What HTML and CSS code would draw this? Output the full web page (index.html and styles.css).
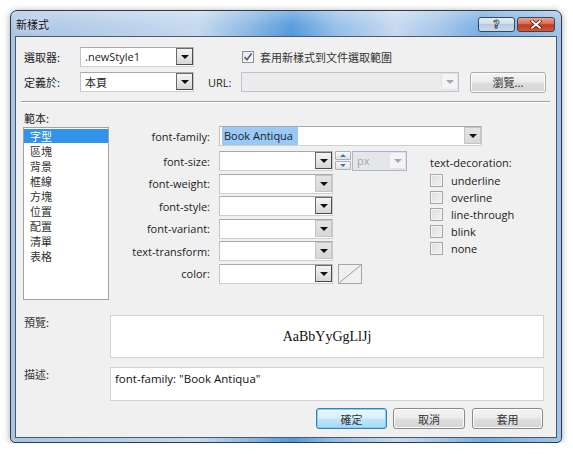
FILE: index.html
```html
<!DOCTYPE html>
<html lang="zh-Hant">
<head>
<meta charset="utf-8">
<title>新樣式</title>
<link rel="stylesheet" href="styles.css">
</head>
<body>
<div class="window">
  <div class="titlebar">
    <span class="title zh">新樣式</span>
    <div class="caps">
      <span class="cap help">?</span>
      <span class="cap close"><svg width="12" height="9" viewBox="0 0 12 9"><path d="M2 1.2 L10 7.8 M10 1.2 L2 7.8" stroke="#5a2416" stroke-width="3.4" stroke-linecap="square"/><path d="M2 1.2 L10 7.8 M10 1.2 L2 7.8" stroke="#ffffff" stroke-width="1.8" stroke-linecap="square"/></svg></span>
    </div>
  </div>
  <div class="client">
    <div class="row">
      <span class="lbl1 zh">選取器:</span>
      <div class="combo w114"><span class="val">.newStyle1</span><span class="dd"></span></div>
      <label class="apply">
        <span class="chk-on"><svg width="10" height="10" viewBox="0 0 10 10"><path d="M1.5 5.2 L4 7.8 L8.6 1.6" fill="none" stroke="#4a5f85" stroke-width="1.7"/></svg></span>
        <span class="zh">套用新樣式到文件選取範圍</span>
      </label>
    </div>
    <div class="row r2">
      <span class="lbl1 zh">定義於:</span>
      <div class="combo w114"><span class="val zh">本頁</span><span class="dd"></span></div>
      <span class="url-lbl">URL:</span>
      <div class="combo url disabled"><span class="val"></span><span class="dd off"></span></div>
      <span class="btn browse zh">瀏覽...</span>
    </div>
    <div class="sep"></div>
    <div class="main">
      <div class="cats">
        <div class="cats-lbl zh">範本:</div>
        <ul class="list zh">
          <li class="sel">字型</li>
          <li>區塊</li>
          <li>背景</li>
          <li>框線</li>
          <li>方塊</li>
          <li>位置</li>
          <li>配置</li>
          <li>清單</li>
          <li>表格</li>
        </ul>
      </div>
      <div class="form">
        <span class="flbl first">font-family:</span>
        <div class="combo wide first"><span class="val"><span class="hl">Book Antiqua</span></span><span class="dd flat"></span></div>

        <span class="flbl">font-size:</span>
        <div class="fs">
          <div class="combo w114"><span class="val"></span><span class="dd"></span></div>
          <div class="spin"><span class="sp up"></span><span class="sp down"></span></div>
          <div class="combo px disabled"><span class="val">px</span><span class="dd off"></span></div>
        </div>

        <div class="deco">
          <div class="deco-lbl">text-decoration:</div>
          <div class="cb-row"><span class="cb"></span><span>underline</span></div>
          <div class="cb-row"><span class="cb"></span><span>overline</span></div>
          <div class="cb-row"><span class="cb"></span><span>line-through</span></div>
          <div class="cb-row"><span class="cb"></span><span>blink</span></div>
          <div class="cb-row"><span class="cb"></span><span>none</span></div>
        </div>

        <span class="flbl">font-weight:</span>
        <div class="combo w114"><span class="val"></span><span class="dd flat"></span></div>

        <span class="flbl">font-style:</span>
        <div class="combo w114"><span class="val"></span><span class="dd"></span></div>

        <span class="flbl">font-variant:</span>
        <div class="combo w114"><span class="val"></span><span class="dd flat"></span></div>

        <span class="flbl">text-transform:</span>
        <div class="combo w114"><span class="val"></span><span class="dd flat"></span></div>

        <span class="flbl">color:</span>
        <div class="colorrow">
          <div class="combo w114"><span class="val"></span><span class="dd"></span></div>
          <span class="swatch"><svg width="22" height="18" viewBox="0 0 22 18"><path d="M0.5 17.5 L21.5 0.5" stroke="#9a9a9a" stroke-width="1"/></svg></span>
        </div>
      </div>
    </div>
    <div class="bottom">
      <span class="blbl zh">預覽:</span>
      <div class="preview">AaBbYyGgLlJj</div>
      <span class="blbl zh">描述:</span>
      <div class="desc">font-family: "Book Antiqua"</div>
    </div>
    <div class="buttons">
      <span class="btn default zh b1">確定</span>
      <span class="btn zh b2">取消</span>
      <span class="btn zh b3">套用</span>
    </div>
  </div>
</div>
</body>
</html>
```
FILE: styles.css
```css
* { box-sizing: border-box; }

body {
  margin: 0;
  background: #ffffff;
  font-family: "Open Sans", "Noto Sans CJK TC", sans-serif;
  font-size: 11px;
  color: #1e1e1e;
}

.zh {
  font-family: "Noto Sans CJK TC", sans-serif;
  font-size: 11px;
}

.window {
  width: 552px;
  height: 433px;
  margin: 10px 0 0 10px;
  border: 1px solid #2e3a47;
  border-radius: 7px 7px 5px 5px;
  padding: 0 4px 4px;
  display: flex;
  flex-direction: column;
  background:
    linear-gradient(180deg, rgba(255,255,255,0.3) 0px, rgba(255,255,255,0.06) 14px, rgba(255,255,255,0) 25px),
    linear-gradient(90deg, #a9c4e3 0%, #b6cee9 18%, #c4d8ef 34%, #86b4e2 44%, #5199dc 51%, #93bde7 59%, #c5d8ef 70%, #a4c5e9 78%, #74abe1 86%, #a0c4ea 100%);
  box-shadow: 0 1px 7px rgba(0,0,0,0.35);
}

.titlebar {
  height: 25px;
  display: flex;
  align-items: center;
  padding-left: 1px;
}

.title {
  color: #111;
  margin-top: 1px;
  text-shadow: 0 0 6px rgba(255,255,255,0.9);
}

.caps {
  margin-left: auto;
  margin-right: 2px;
  margin-top: 2px;
  display: flex;
  gap: 2px;
}

.cap {
  height: 15px;
  border: 1px solid #3b4654;
  border-radius: 3px;
  display: flex;
  align-items: center;
  justify-content: center;
}

.help {
  width: 37px;
  background: linear-gradient(180deg, #e6eef8 0%, #cfdcec 45%, #b7cbe3 50%, #c9daee 100%);
  color: #fff;
  font-family: "DejaVu Sans", sans-serif;
  font-weight: bold;
  font-size: 11px;
  line-height: 1;
  -webkit-text-stroke: 0.8px #3a3f48;
}

.close {
  width: 38px;
  background: linear-gradient(180deg, #e8a493 0%, #d96d55 45%, #c43a1c 52%, #d4553a 100%);
}

.client {
  flex: 1;
  background: #f0f0f0;
  border: 1px solid #4c5866;
  padding: 10px 0 0 8px;
  display: flex;
  flex-direction: column;
}

.row {
  display: flex;
  align-items: center;
  height: 20px;
}

.r2 { margin-top: 5px; }

.lbl1 { width: 56px; color: #222; }

.combo {
  height: 20px;
  border: 1px solid #b4b4b4;
  border-color: #a9a9a9 #c9c9c9 #cfcfcf #c3c3c3;
  background: #ffffff;
  display: flex;
  align-items: flex-start;
}

.combo .val {
  flex: 1;
  height: 18px;
  line-height: 18px;
  padding-left: 4px;
  white-space: nowrap;
  overflow: hidden;
}

.w114 { width: 114px; }

.dd {
  width: 17px;
  height: 17px;
  border: 1px solid #5e5e5e;
  border-color: #6a6a6a #4a4a4a #4a4a4a #6a6a6a;
  background: linear-gradient(180deg, #f4f4f4 0%, #e6e6e6 50%, #d6d6d6 100%);
  position: relative;
}

.dd::after {
  content: "";
  position: absolute;
  left: 4px;
  top: 6px;
  border-left: 4px solid transparent;
  border-right: 4px solid transparent;
  border-top: 4px solid #111;
}

.dd.flat {
  border-color: #c4c4c4;
  background: linear-gradient(180deg, #e4e4e4 0%, #d8d8d8 100%);
}

.dd.off {
  border-color: #e2e2e2;
  background: #f4f4f4;
}

.dd.off::after { border-top-color: #a8a8a8; }

.apply {
  margin-left: 48px;
  display: flex;
  align-items: center;
  gap: 6px;
  color: #333;
}

.chk-on {
  width: 12px;
  height: 12px;
  border: 1px solid #8e8f8f;
  background: linear-gradient(135deg, #e6e6e6, #ffffff);
  display: flex;
  align-items: center;
  justify-content: center;
}

.url-lbl {
  margin-left: 14px;
  width: 33px;
  color: #222;
}

.combo.url {
  width: 218px;
}

.combo.disabled {
  border-color: #b6c4d6;
  background: #ececec;
}

.btn {
  height: 21px;
  border: 1px solid #8a8a8a;
  border-radius: 3px;
  background: linear-gradient(180deg, #f4f4f4 0%, #ececec 48%, #dedede 52%, #d6d6d6 100%);
  box-shadow: inset 0 0 0 1px #fbfbfb;
  display: flex;
  align-items: center;
  justify-content: center;
  color: #333;
}

.browse {
  margin-left: 11px;
  width: 76px;
  height: 21px;
  border-color: #acacac;
}

.sep {
  margin: 9px 0 0 -3px;
  width: 529px;
  height: 2px;
  border-top: 1px solid #a0a0a0;
  border-bottom: 1px solid #ffffff;
}

.main {
  margin-top: 8px;
  display: flex;
  align-items: flex-start;
}

.cats {
  width: 86px;
  margin-left: -1px;
}

.cats-lbl {
  height: 14px;
  line-height: 14px;
  padding-left: 1px;
}

.list {
  margin: 2px 0 0;
  height: 173px;
  border: 1px solid #a2a2a2;
  background: #ffffff;
  padding: 1px 0 0;
  list-style: none;
  color: #333;
}

.list li {
  height: 15px;
  line-height: 15px;
  padding-left: 6px;
}

.list li.sel {
  background: #3393ea;
  color: #ffffff;
  height: 14px;
  line-height: 14px;
  margin-bottom: 1px;
}

.form {
  margin-left: 9px;
  padding-top: 15px;
  display: grid;
  grid-template-columns: 92px 202px 120px;
  grid-template-rows: 22.5px repeat(6, 20px);
  column-gap: 9px;
  row-gap: 2.5px;
  align-items: start;
}

.flbl {
  height: 20px;
  display: flex;
  align-items: center;
  justify-content: flex-end;
  white-space: nowrap;
  color: #222;
}

.combo.wide {
  grid-column: 2 / 4;
  width: 263px;
}

.hl {
  background: #99c9f7;
  padding: 1px 5px 2px 2px;
  margin-left: -2px;
}

.fs {
  display: flex;
  align-items: flex-start;
}

.spin {
  margin-left: 2px;
  width: 16px;
  height: 20px;
  display: flex;
  flex-direction: column;
  gap: 1px;
}

.sp {
  height: 9px;
  border: 1px solid #b0b0b0;
  border-radius: 1px;
  background: linear-gradient(180deg, #fafafa, #e2e2e2);
  position: relative;
}

.sp::after {
  content: "";
  position: absolute;
  left: 4px;
  border-left: 3px solid transparent;
  border-right: 3px solid transparent;
}

.sp.up::after { top: 2px; border-bottom: 3px solid #3f74b4; }
.sp.down::after { top: 2px; border-top: 3px solid #3f74b4; }

.combo.px {
  margin-left: 1px;
  width: 55px;
  border-color: #a2b7d3;
  background: #e6e6e6;
}

.combo.px .val { color: #a6a6a6; }

.deco {
  grid-column: 3;
  grid-row: 2 / span 6;
}

.deco-lbl {
  padding-top: 4px;
  height: 21px;
  line-height: 16px;
  color: #222;
}

.cb-row {
  height: 17px;
  display: flex;
  align-items: center;
  gap: 8px;
  color: #222;
}

.cb {
  width: 13px;
  height: 13px;
  border: 1px solid #a6a6a6;
  background: linear-gradient(135deg, #dedede, #f2f2f2);
  box-shadow: inset 0 0 0 1px #f4f4f4;
}

.colorrow {
  display: flex;
  align-items: flex-start;
}

.swatch {
  margin-left: 5px;
  width: 24px;
  height: 20px;
  border: 1px solid #a6a6a6;
  background: #f0f0f0;
  display: block;
}

.swatch svg { display: block; }

.bottom {
  margin-top: 15px;
  display: grid;
  grid-template-columns: 86px 434px;
  grid-template-rows: 43px 34px;
  row-gap: 9px;
}

.blbl {
  margin-top: -1px;
  color: #333;
}

.preview {
  background: #ffffff;
  border: 1px solid #d2d2d2;
  display: flex;
  align-items: center;
  justify-content: center;
  font-family: "Liberation Serif", serif;
  font-size: 14px;
  color: #111;
}

.desc {
  background: #ffffff;
  border: 1px solid #d2d2d2;
  padding: 3px 4px;
  color: #111;
  font-size: 11.5px;
}

.buttons {
  margin-top: 7px;
  display: flex;
  padding-left: 292px;
}

.b1 { width: 71px; }
.b2 { width: 72px; margin-left: 6px; }
.b3 { width: 71px; margin-left: 7px; }

.btn.default {
  border-color: #3c7fb1;
  background: linear-gradient(180deg, #eaf6fd 0%, #d9f0fc 48%, #bee6fd 52%, #a7d9f5 100%);
  box-shadow: inset 0 0 0 1px #7fd2f7;
}
```
